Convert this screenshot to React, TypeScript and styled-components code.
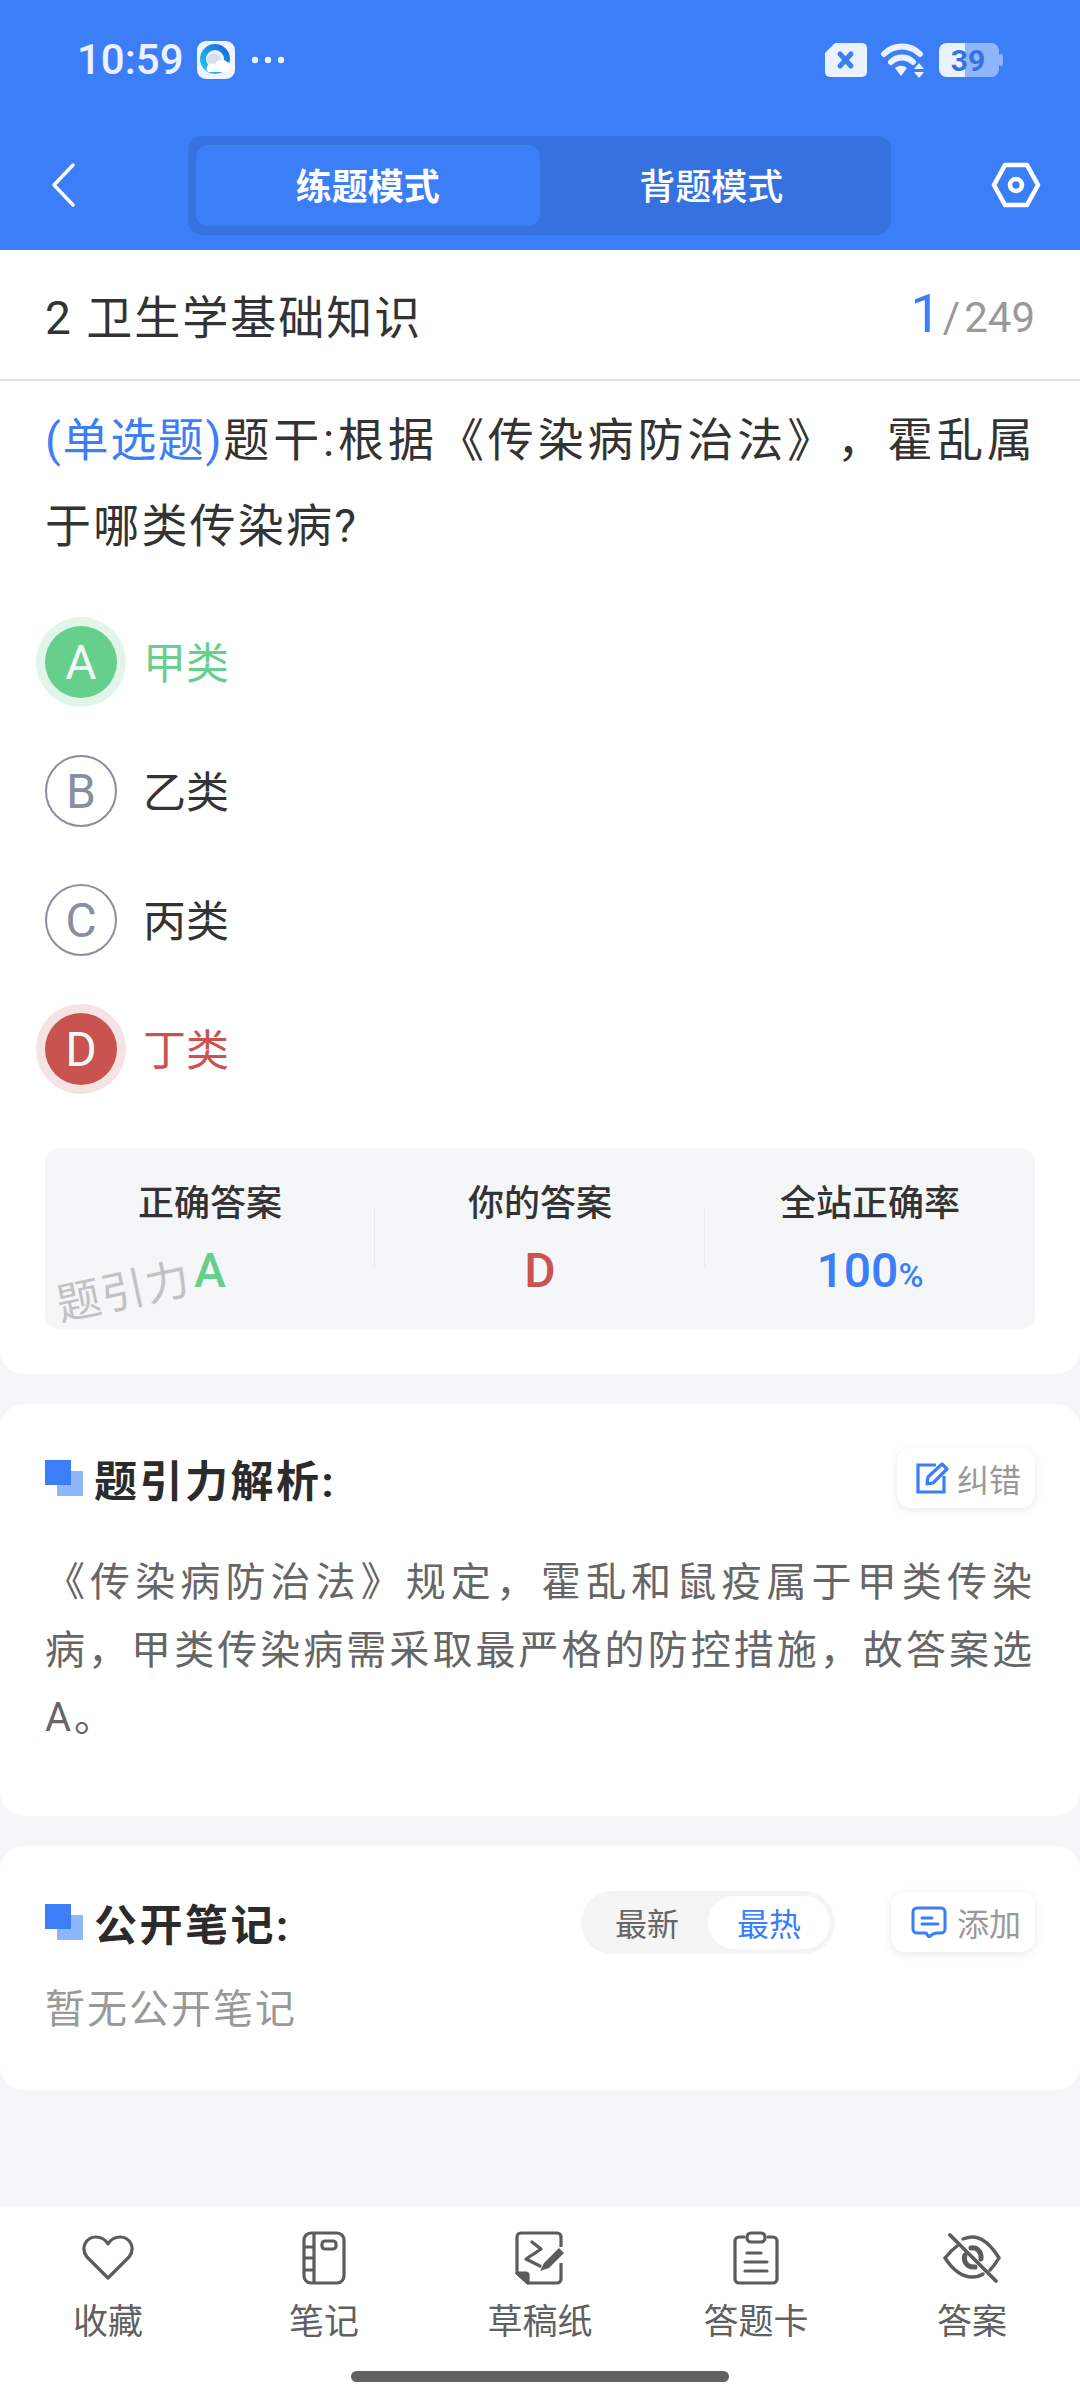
import styled, { createGlobalStyle } from "styled-components";

const GlobalStyle = createGlobalStyle`
  html, body {
    margin: 0;
    padding: 0;
    background: #f4f6f8;
  }
  * {
    box-sizing: border-box;
  }
  body {
    font-family: Roboto, "Noto Sans CJK SC", sans-serif;
    text-spacing-trim: space-all;
  }
`;

const Page = styled.div`
  width: 1080px;
  height: 2400px;
  display: flex;
  flex-direction: column;
  background: #f4f6f8;
  overflow: hidden;
`;

const Header = styled.header`
  height: 250px;
  background: #3b7ef8;
  display: flex;
  flex-direction: column;
`;

const StatusBar = styled.div`
  height: 136px;
  padding: 40px 77px 0 77px;
  display: flex;
  justify-content: space-between;
  align-items: flex-start;
`;

const StatusGroup = styled.div`
  display: flex;
  align-items: center;
  height: 40px;
`;

const Time = styled.span`
  font-size: 42px;
  line-height: 40px;
  font-weight: 500;
  color: #ebf2ff;
  width: 120px;
`;

const NavRow = styled.div`
  display: flex;
  align-items: flex-start;
  justify-content: space-between;
  padding: 0 39px 0 51px;
`;

const BackButton = styled.div`
  margin-top: 27px;
  height: 44px;
`;

const ModeSwitch = styled.div`
  width: 703px;
  height: 99px;
  padding: 9px 8px;
  margin-left: 13px;
  display: flex;
  border-radius: 14px;
  background: #3572e0;
`;

const ModeTab = styled.div<{ $active?: boolean }>`
  flex: 1;
  display: flex;
  align-items: center;
  justify-content: center;
  padding-bottom: 4px;
  border-radius: 12px;
  color: #fff;
  font-size: 36px;
  font-weight: ${({ $active }) => ($active ? 700 : 500)};
  background: ${({ $active }) => ($active ? "#3b7ef8" : "transparent")};
`;

const SettingsButton = styled.div`
  margin-top: 26px;
  height: 46px;
`;

const QuestionCard = styled.section`
  background: #fff;
  height: 1124px;
  border-radius: 0 0 24px 24px;
  display: flex;
  flex-direction: column;
`;

const ChapterRow = styled.div`
  height: 131px;
  padding: 0 45px 2px;
  display: flex;
  align-items: center;
  justify-content: space-between;
  border-bottom: 2px solid #e4e4e4;
`;

const ChapterName = styled.div`
  font-size: 46px;
  letter-spacing: 2px;
  color: #333;
`;

const Counter = styled.div`
  display: flex;
  align-items: baseline;
  color: #999;
  font-size: 42px;
`;

const CounterCurrent = styled.span`
  font-size: 54px;
  color: #3b7ef8;
  margin-right: 2px;
`;

const CounterSlash = styled.span`
  margin-right: 4px;
`;

const Question = styled.div`
  padding: 16px 45px 0;
  font-size: 46px;
  line-height: 86px;
  letter-spacing: 2.2px;
  text-align: justify;
  color: #333;
`;

const QuestionTag = styled.span`
  color: #3b7ef8;
  letter-spacing: 0;
`;

const OptionList = styled.div`
  margin-top: 57px;
  display: flex;
  flex-direction: column;
  gap: 57px;
  padding: 0 45px;
`;

const OptionRow = styled.div`
  display: flex;
  align-items: center;
  gap: 26px;
  height: 72px;
`;

const optionColor = { correct: "#67cf8c", wrong: "#c9534f", idle: "#8a8ea3" };

type OptionState = keyof typeof optionColor;

const OptionBadge = styled.div<{ $state: OptionState }>`
  width: 72px;
  height: 72px;
  border-radius: 50%;
  display: flex;
  align-items: center;
  justify-content: center;
  font-size: 48px;
  flex-shrink: 0;
  color: ${({ $state }) => ($state === "idle" ? optionColor.idle : "#f0faf4")};
  background: ${({ $state }) =>
    $state === "idle" ? "#fff" : optionColor[$state]};
  border: ${({ $state }) =>
    $state === "idle" ? "2px solid #8a8ea3" : "none"};
  box-shadow: ${({ $state }) =>
    $state === "correct"
      ? "0 0 0 9px #e1f5e9"
      : $state === "wrong"
        ? "0 0 0 9px #f6e3e3"
        : "none"};
`;

const OptionText = styled.span<{ $state: OptionState }>`
  font-size: 43px;
  margin-bottom: 5px;
  color: ${({ $state }) => ($state === "idle" ? "#333" : optionColor[$state])};
`;

const Stats = styled.div`
  position: relative;
  margin: 63px 45px 0;
  height: 181px;
  display: flex;
  border-radius: 14px;
  background: #f4f6f8;
`;

const StatCell = styled.div<{ $divider?: boolean }>`
  position: relative;
  flex: 1;
  display: flex;
  flex-direction: column;
  align-items: center;
  padding-top: 34px;

  ${({ $divider }) =>
    $divider &&
    `&::after {
      content: "";
      position: absolute;
      right: 0;
      top: 60px;
      height: 59px;
      width: 1px;
      background: #e8eaed;
    }`}
`;

const StatLabel = styled.div`
  font-size: 36px;
  line-height: 44px;
  font-weight: 500;
  color: #333;
`;

const StatValue = styled.div<{ $color: string }>`
  margin-top: 21px;
  font-size: 48px;
  line-height: 48px;
  font-weight: 500;
  color: ${({ $color }) => $color};
`;

const StatUnit = styled.span`
  font-size: 34px;
`;

const Watermark = styled.div`
  position: absolute;
  left: 11px;
  top: 120px;
  font-size: 44px;
  line-height: 48px;
  color: #c2c2c2;
  transform: rotate(-12deg);
  letter-spacing: 1px;
`;

const Card = styled.section<{ $height: number; $top: number }>`
  margin-top: 30px;
  background: #fff;
  border-radius: 24px;
  height: ${({ $height }) => $height}px;
  padding: ${({ $top }) => $top}px 45px 0;
`;

const SectionHead = styled.div`
  display: flex;
  align-items: center;
  height: 60px;
`;

const SectionMark = styled.div`
  position: relative;
  width: 38px;
  height: 36px;
  margin-right: 11px;
  flex-shrink: 0;

  &::before,
  &::after {
    content: "";
    position: absolute;
    width: 26px;
    height: 25px;
  }
  &::before {
    right: 0;
    bottom: 0;
    background: #8db6fb;
  }
  &::after {
    left: 0;
    top: 0;
    background: #3b7ef8;
  }
`;

const SectionTitle = styled.h2`
  margin: 0;
  flex: 1;
  font-size: 43px;
  font-weight: 700;
  letter-spacing: 2.5px;
  color: #2b2b2b;
`;

const ActionButton = styled.div<{ $left: number; $gap: number }>`
  height: 60px;
  padding: 0 14px 0 ${({ $left }) => $left}px;
  display: flex;
  align-items: center;
  gap: ${({ $gap }) => $gap}px;
  border-radius: 14px;
  background: #fff;
  box-shadow: 0 2px 10px rgba(0, 0, 0, 0.09);
  font-size: 32px;
  color: #999;
`;

const Explanation = styled.p`
  margin: 41px 0 0;
  font-size: 40px;
  line-height: 67.5px;
  letter-spacing: 3px;
  text-align: justify;
  color: #666;
`;

const SortPill = styled.div`
  width: 254px;
  height: 63px;
  margin-right: 56px;
  padding: 5px;
  display: flex;
  align-items: center;
  border-radius: 32px;
  background: #f5f5f5;
  font-size: 32px;
`;

const SortOption = styled.div<{ $active?: boolean }>`
  height: 53px;
  display: flex;
  align-items: center;
  justify-content: center;
  flex: ${({ $active }) => ($active ? "0 0 122px" : 1)};
  border-radius: 27px;
  background: ${({ $active }) => ($active ? "#fff" : "transparent")};
  color: ${({ $active }) => ($active ? "#3b7ef8" : "#666")};
`;

const EmptyNote = styled.div`
  margin-top: 34px;
  font-size: 40px;
  line-height: 48px;
  letter-spacing: 2px;
  color: #999;
`;

const BottomBar = styled.nav`
  margin-top: auto;
  height: 195px;
  background: #fff;
  display: flex;
  flex-direction: column;
  border-top: 1px solid #eef0f2;
`;

const BottomItems = styled.div`
  display: grid;
  grid-template-columns: repeat(5, 1fr);
  padding-top: 25px;
`;

const BottomItem = styled.div`
  display: flex;
  flex-direction: column;
  align-items: center;
  color: #5c5c5c;
`;

const BottomIcon = styled.div`
  height: 54px;
  display: flex;
  align-items: center;
  justify-content: center;
`;

const BottomLabel = styled.span`
  margin-top: 16px;
  font-size: 35px;
  line-height: 44px;
  color: #606060;
`;

const HomeBar = styled.div`
  align-self: center;
  margin-top: 26px;
  width: 378px;
  height: 11px;
  border-radius: 6px;
  background: #606060;
`;

const BrowserIcon = () => (
  <svg width="38" height="38" viewBox="0 0 38 38">
    <defs>
      <linearGradient id="qb" x1="0" y1="1" x2="1" y2="0">
        <stop offset="0" stopColor="#25c5f2" />
        <stop offset="1" stopColor="#1668e8" />
      </linearGradient>
    </defs>
    <rect width="38" height="38" rx="9" fill="#eef5ff" />
    <circle cx="18" cy="18" r="12" fill="none" stroke="url(#qb)" strokeWidth="6" />
    <circle cx="17" cy="19" r="7" fill="#d9dfe8" />
    <path d="M11 31h18a5 5 0 0 0 1-10 7 7 0 0 0-12 3 4 4 0 0 0-7 7z" fill="#fff" />
  </svg>
);

const DotsIcon = () => (
  <svg width="34" height="8" viewBox="0 0 34 8" style={{ marginLeft: 16 }}>
    <circle cx="4" cy="4" r="3.2" fill="#ebf2ff" />
    <circle cx="17" cy="4" r="3.2" fill="#ebf2ff" />
    <circle cx="30" cy="4" r="3.2" fill="#ebf2ff" />
  </svg>
);

const SimIcon = () => (
  <svg width="44" height="36" viewBox="0 0 44 36">
    <path
      d="M11 1h27a5 5 0 0 1 5 5v24a5 5 0 0 1-5 5H6a5 5 0 0 1-5-5V11z"
      fill="#ebf2ff"
    />
    <path
      d="M16 12l11 12M27 12L16 24"
      stroke="#3b7ef8"
      strokeWidth="5"
      strokeLinecap="round"
    />
  </svg>
);

const WifiIcon = () => (
  <svg width="46" height="36" viewBox="0 0 46 36" style={{ marginLeft: 12 }}>
    <g fill="none" stroke="#ebf2ff" strokeWidth="6" strokeLinecap="round">
      <path d="M4 12c10-10 26-10 36 0" />
      <path d="M11 20c6-6 16-6 22 0" />
    </g>
    <path d="M15 26c4-3 8-3 12 0l-6 8z" fill="#ebf2ff" />
    <path d="M39 21l5 6H34zM39 36l5-6H34z" fill="#ebf2ff" />
  </svg>
);

const BatteryIcon = () => (
  <svg width="64" height="36" viewBox="0 0 64 36" style={{ marginLeft: 13 }}>
    <rect x="0" y="1" width="60" height="34" rx="8" fill="#8fb5fb" />
    <path d="M8 1h18v34H8a8 8 0 0 1-8-8V9a8 8 0 0 1 8-8z" fill="#ebf2ff" />
    <rect x="60" y="12" width="4" height="12" rx="2" fill="#8fb5fb" />
    <text
      x="29"
      y="29"
      textAnchor="middle"
      fontSize="30"
      fontWeight="700"
      fontFamily="Roboto, sans-serif"
      fill="#3572e0"
    >
      39
    </text>
  </svg>
);

const BackIcon = () => (
  <svg width="24" height="44" viewBox="0 0 24 44">
    <path
      d="M22 2L3 22l19 20"
      fill="none"
      stroke="#fff"
      strokeWidth="3.4"
      strokeLinecap="round"
      strokeLinejoin="round"
    />
  </svg>
);

const SettingsIcon = () => (
  <svg width="50" height="46" viewBox="0 0 50 46">
    <path
      d="M14 3h22l11 20-11 20H14L3 23z"
      fill="none"
      stroke="#fff"
      strokeWidth="4.6"
      strokeLinejoin="round"
    />
    <circle cx="25" cy="23" r="6" fill="none" stroke="#fff" strokeWidth="4.6" />
  </svg>
);

const EditIcon = () => (
  <svg width="34" height="32" viewBox="0 0 34 32" fill="none" stroke="#3b7ef8" strokeWidth="3.2">
    <path d="M20 3H2v27h26V14" />
    <path d="M12 15L26 2l5 5-14 14-6 1z" strokeLinejoin="round" />
  </svg>
);

const CommentIcon = () => (
  <svg width="36" height="32" viewBox="0 0 36 32" fill="none" stroke="#3b7ef8" strokeWidth="3" strokeLinecap="round">
    <path
      d="M6 2h24a4 4 0 0 1 4 4v17a4 4 0 0 1-4 4h-5l-3 1-4 3-3-4H6a4 4 0 0 1-4-4V6a4 4 0 0 1 4-4z"
      strokeLinejoin="round"
    />
    <path d="M11 12h10M11 18h16" />
  </svg>
);

const HeartIcon = () => (
  <svg width="54" height="52" viewBox="0 0 54 52" fill="none" stroke="currentColor" strokeWidth="3.2" strokeLinejoin="round">
    <path d="M27 46L6 25C-1 16 5 5 15 5c5 0 9 2 12 7 3-5 7-7 12-7 10 0 16 11 9 20z" />
  </svg>
);

const NotebookIcon = () => (
  <svg width="44" height="54" viewBox="0 0 44 54" fill="none" stroke="currentColor" strokeWidth="3.2" strokeLinejoin="round">
    <rect x="2" y="2" width="40" height="50" rx="7" />
    <path d="M12 2v50M2 16h10M2 27h10M2 39h10" />
    <rect x="20" y="10" width="14" height="8" rx="3" />
  </svg>
);

const DraftIcon = () => (
  <svg width="50" height="54" viewBox="0 0 50 54" fill="none" stroke="currentColor" strokeWidth="3.2" strokeLinejoin="round">
    <path d="M46 32v16a4 4 0 0 1-4 4H13L2 42V6a4 4 0 0 1 4-4h36a4 4 0 0 1 4 4v10" />
    <path d="M17 11l9 7-15 10 14 7" strokeLinecap="round" />
    <path d="M2 42h9a2 2 0 0 1 2 2v8z" fill="currentColor" />
    <path d="M25 40l4-8 15-15 5 5-15 15z" fill="currentColor" stroke="none" />
  </svg>
);

const ClipboardIcon = () => (
  <svg width="46" height="54" viewBox="0 0 46 54" fill="none" stroke="currentColor" strokeWidth="3.2" strokeLinecap="round">
    <path d="M11 6H6a4 4 0 0 0-4 4v38a4 4 0 0 0 4 4h34a4 4 0 0 0 4-4V10a4 4 0 0 0-4-4h-5" />
    <rect x="14" y="2" width="18" height="9" rx="4" />
    <path d="M14 22h14M12 31h22M12 40h22" />
  </svg>
);

const EyeOffIcon = () => (
  <svg width="58" height="50" viewBox="0 0 58 50" fill="none" stroke="currentColor" strokeWidth="3.4" strokeLinecap="round">
    <path d="M14 13C10 16 6 20 2 25c8 12 17 19 27 19 4 0 8-1 11-3" />
    <path d="M20 6c3-1 6-2 9-2 10 0 19 8 27 21-3 5-6 9-9 12" />
    <path d="M22 22c-2 5 1 13 10 12M28 15c6-1 11 4 10 11" strokeWidth="5" />
    <path d="M7 2l46 46" strokeWidth="3.8" />
  </svg>
);

const options: { key: string; text: string; state: OptionState }[] = [
  { key: "A", text: "甲类", state: "correct" },
  { key: "B", text: "乙类", state: "idle" },
  { key: "C", text: "丙类", state: "idle" },
  { key: "D", text: "丁类", state: "wrong" },
];

const bottomItems = [
  { label: "收藏", icon: <HeartIcon /> },
  { label: "笔记", icon: <NotebookIcon /> },
  { label: "草稿纸", icon: <DraftIcon /> },
  { label: "答题卡", icon: <ClipboardIcon /> },
  { label: "答案", icon: <EyeOffIcon /> },
];

const App = () => {
  return (
    <Page>
      <GlobalStyle />
      <Header>
        <StatusBar>
          <StatusGroup>
            <Time>10:59</Time>
            <BrowserIcon />
            <DotsIcon />
          </StatusGroup>
          <StatusGroup>
            <SimIcon />
            <WifiIcon />
            <BatteryIcon />
          </StatusGroup>
        </StatusBar>
        <NavRow>
          <BackButton>
            <BackIcon />
          </BackButton>
          <ModeSwitch>
            <ModeTab $active>练题模式</ModeTab>
            <ModeTab>背题模式</ModeTab>
          </ModeSwitch>
          <SettingsButton>
            <SettingsIcon />
          </SettingsButton>
        </NavRow>
      </Header>

      <QuestionCard>
        <ChapterRow>
          <ChapterName>2 卫生学基础知识</ChapterName>
          <Counter>
            <CounterCurrent>1</CounterCurrent>
            <CounterSlash>/</CounterSlash>249
          </Counter>
        </ChapterRow>
        <Question>
          <QuestionTag>(单选题)</QuestionTag>题干:根据《传染病防治法》，霍乱属于哪类传染病?
        </Question>
        <OptionList>
          {options.map((o) => (
            <OptionRow key={o.key}>
              <OptionBadge $state={o.state}>{o.key}</OptionBadge>
              <OptionText $state={o.state}>{o.text}</OptionText>
            </OptionRow>
          ))}
        </OptionList>
        <Stats>
          <StatCell $divider>
            <StatLabel>正确答案</StatLabel>
            <StatValue $color="#67cf8c">A</StatValue>
          </StatCell>
          <StatCell $divider>
            <StatLabel>你的答案</StatLabel>
            <StatValue $color="#c9534f">D</StatValue>
          </StatCell>
          <StatCell>
            <StatLabel>全站正确率</StatLabel>
            <StatValue $color="#3b7ef8">
              100<StatUnit>%</StatUnit>
            </StatValue>
          </StatCell>
          <Watermark>题引力</Watermark>
        </Stats>
      </QuestionCard>

      <Card $height={412} $top={44}>
        <SectionHead>
          <SectionMark />
          <SectionTitle>题引力解析:</SectionTitle>
          <ActionButton $left={19} $gap={7}>
            <EditIcon />
            纠错
          </ActionButton>
        </SectionHead>
        <Explanation>
          《传染病防治法》规定，霍乱和鼠疫属于甲类传染病，甲类传染病需采取最严格的防控措施，故答案选A。
        </Explanation>
      </Card>

      <Card $height={244} $top={46}>
        <SectionHead>
          <SectionMark />
          <SectionTitle>公开笔记:</SectionTitle>
          <SortPill>
            <SortOption>最新</SortOption>
            <SortOption $active>最热</SortOption>
          </SortPill>
          <ActionButton $left={20} $gap={10}>
            <CommentIcon />
            添加
          </ActionButton>
        </SectionHead>
        <EmptyNote>暂无公开笔记</EmptyNote>
      </Card>

      <BottomBar>
        <BottomItems>
          {bottomItems.map((item) => (
            <BottomItem key={item.label}>
              <BottomIcon>{item.icon}</BottomIcon>
              <BottomLabel>{item.label}</BottomLabel>
            </BottomItem>
          ))}
        </BottomItems>
        <HomeBar />
      </BottomBar>
    </Page>
  );
};

export default App;
